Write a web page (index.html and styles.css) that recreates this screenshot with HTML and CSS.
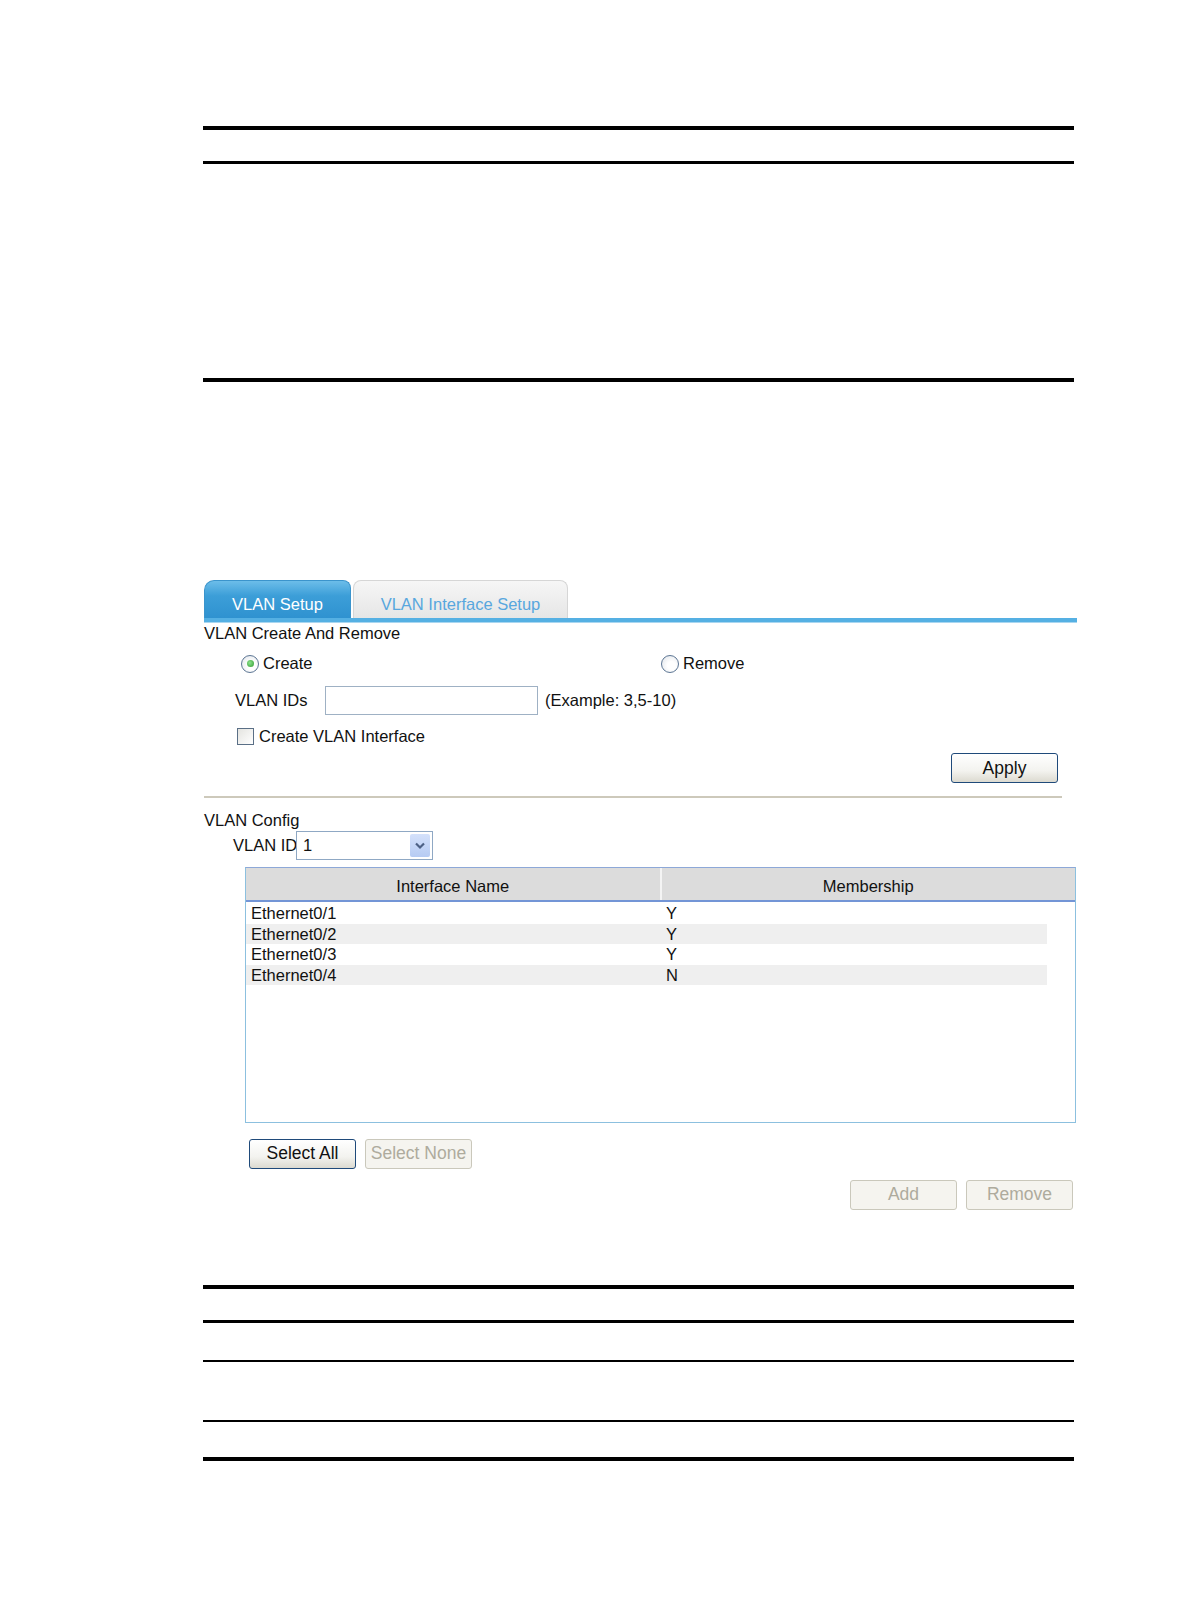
FILE: index.html
```html
<!DOCTYPE html>
<html>
<head>
<meta charset="utf-8">
<link rel="stylesheet" href="styles.css">
</head>
<body>
<div class="doc">
  <div class="rule thick"></div>
  <div class="rule mid gap-a"></div>
  <div class="rule thick gap-b"></div>

  <div class="panel">
    <div class="tabs">
      <div class="tab active">VLAN Setup</div>
      <div class="tab">VLAN Interface Setup</div>
    </div>
    <div class="tabline"></div>

    <div class="title">VLAN Create And Remove</div>
    <div class="radio-row">
      <label class="opt create"><span class="radio checked"></span>Create</label>
      <label class="opt remove"><span class="radio"></span>Remove</label>
    </div>
    <div class="ids-row">
      <span class="ids-label">VLAN IDs</span>
      <span class="textbox"></span>
      <span class="hint">(Example: 3,5-10)</span>
    </div>
    <div class="check-row">
      <span class="checkbox"></span>Create VLAN Interface
    </div>
    <div class="apply-row">
      <span class="btn apply">Apply</span>
    </div>
    <div class="sep"></div>

    <div class="title cfg">VLAN Config</div>
    <div class="id-row">
      <span class="id-label">VLAN ID</span>
      <span class="select"><span class="sel-val">1</span><span class="sel-btn"><svg width="12" height="8" viewBox="0 0 12 8"><path d="M2 1.5 L6 5.5 L10 1.5" fill="none" stroke="#4d6185" stroke-width="2.2"/></svg></span></span>
    </div>

    <div class="grid">
      <div class="ghead">
        <div class="gh">Interface Name</div>
        <div class="gh">Membership</div>
      </div>
      <div class="gbody">
        <div class="grow"><span class="c1">Ethernet0/1</span><span class="c2">Y</span></div>
        <div class="grow alt"><span class="c1">Ethernet0/2</span><span class="c2">Y</span></div>
        <div class="grow"><span class="c1">Ethernet0/3</span><span class="c2">Y</span></div>
        <div class="grow alt"><span class="c1">Ethernet0/4</span><span class="c2">N</span></div>
      </div>
    </div>

    <div class="sel-row">
      <span class="btn">Select All</span>
      <span class="btn disabled">Select None</span>
    </div>
    <div class="act-row">
      <span class="btn disabled">Add</span>
      <span class="btn disabled">Remove</span>
    </div>
  </div>

  <div class="rule thick gap-c"></div>
  <div class="rule mid gap-d"></div>
  <div class="rule thin gap-e"></div>
  <div class="rule thin gap-f"></div>
  <div class="rule thick gap-g"></div>
</div>
</body>
</html>
```
FILE: styles.css
```css
html, body {
  margin: 0;
  padding: 0;
  background: #fff;
}
body {
  font-family: "Liberation Sans", Arial, sans-serif;
  font-size: 16.5px;
  color: #111;
}
.doc {
  margin-left: 203px;
  width: 871px;
  padding-top: 126px;
  padding-bottom: 100px;
}
.rule { background: #000; }
.rule.thick { height: 4px; }
.rule.mid { height: 3px; }
.rule.thin { height: 2px; }
.gap-a { margin-top: 31px; }
.gap-b { margin-top: 214px; }
.gap-c { margin-top: 75px; }
.gap-d { margin-top: 31px; }
.gap-e { margin-top: 37px; }
.gap-f { margin-top: 58px; }
.gap-g { margin-top: 35px; }

.panel {
  margin-top: 198px;
  margin-left: 1px;
  width: 873px;
}
.tabs {
  display: flex;
  align-items: flex-end;
  height: 38px;
}
.tab {
  box-sizing: border-box;
  height: 38px;
  width: 215px;
  margin-left: 2px;
  border: 1px solid #d6d6d6;
  border-bottom: none;
  border-radius: 8px 8px 0 0;
  background: linear-gradient(#f6f6f6, #e6e6e6);
  color: #58a7de;
  text-align: center;
  line-height: 47px;
}
.tab.active {
  width: 147px;
  margin-left: 0;
  border: 1px solid #3b94cc;
  border-bottom: none;
  border-radius: 10px 8px 0 0;
  background: linear-gradient(#6cbde9, #3c9ed8 40%, #2f92d0);
  color: #fff;
}
.tabline {
  height: 4px;
  background: #55b0e3;
  border-bottom: 1px solid #a9d6f0;
}
.title {
  line-height: 21px;
  white-space: nowrap;
}
.radio-row {
  display: flex;
  height: 21px;
  margin-top: 9px;
  align-items: center;
}
.opt {
  display: flex;
  align-items: center;
  gap: 4px;
}
.opt.create { margin-left: 37px; width: 420px; }
.radio {
  box-sizing: border-box;
  width: 18px;
  height: 18px;
  border-radius: 50%;
  border: 1px solid #5d7694;
  background: radial-gradient(circle at 60% 60%, #fff 30%, #dde2e8 100%);
  position: relative;
}
.radio.checked::after {
  content: "";
  position: absolute;
  left: 4.5px;
  top: 4.5px;
  width: 7px;
  height: 7px;
  border-radius: 50%;
  background: radial-gradient(circle at 40% 40%, #8de38d, #2f9a2f);
}
.ids-row {
  display: flex;
  align-items: center;
  margin-top: 12px;
  height: 29px;
}
.ids-label { margin-left: 31px; width: 90px; white-space: nowrap; }
.textbox {
  box-sizing: border-box;
  width: 213px;
  height: 29px;
  border: 1px solid #9fb1c4;
  background: #fff;
}
.hint { margin-left: 7px; white-space: nowrap; }
.check-row {
  display: flex;
  align-items: center;
  gap: 5px;
  margin-top: 12px;
  height: 18px;
  padding-left: 33px;
  white-space: nowrap;
}
.checkbox {
  box-sizing: border-box;
  width: 17px;
  height: 17px;
  border: 1px solid #5a6f86;
  background: linear-gradient(135deg, #e4e4e0, #fff);
}
.apply-row {
  display: flex;
  justify-content: flex-end;
  padding-right: 19px;
  margin-top: 8px;
}
.btn {
  box-sizing: border-box;
  display: inline-flex;
  align-items: center;
  justify-content: center;
  width: 107px;
  height: 30px;
  border: 1px solid #1f4a7a;
  border-radius: 3px;
  background: linear-gradient(#ffffff, #f3f3ef 60%, #dcdad0);
  color: #111;
  font-size: 17.5px;
  white-space: nowrap;
}
.btn.disabled {
  border-color: #cac8bb;
  background: #f5f4ef;
  color: #aeab9d;
}
.sep {
  margin-top: 13px;
  width: 858px;
  height: 2px;
  background: #cdc9bb;
}
.title.cfg { margin-top: 12px; }
.id-row {
  display: flex;
  align-items: center;
  height: 29px;
}
.id-label { margin-left: 29px; width: 63px; flex-shrink: 0; white-space: nowrap; }
.select {
  box-sizing: border-box;
  display: flex;
  align-items: center;
  width: 137px;
  height: 29px;
  border: 1px solid #8fa8c4;
  padding: 2px;
  background: #fff;
  flex-shrink: 0;
}
.sel-val { flex: 1; padding-left: 4px; line-height: 18px; margin-top: -1px; }
.sel-btn {
  width: 20px;
  height: 23px;
  background: linear-gradient(#d4e1fb, #b6cbf3);
  border-radius: 2px;
  display: flex;
  align-items: center;
  justify-content: center;
}
.grid {
  box-sizing: border-box;
  margin-top: 7px;
  margin-left: 41px;
  width: 831px;
  height: 256px;
  border: 1px solid #8cc0df;
  border-top-color: #8da8d8;
}
.ghead {
  display: flex;
  height: 32px;
  background: #dcdcdc;
  border-bottom: 2px solid #7395d6;
}
.gh {
  flex: 1;
  text-align: center;
  line-height: 37px;
}
.gh + .gh { border-left: 2px solid #f4f4f4; }
.gbody { padding-top: 1px; }
.grow {
  display: flex;
  height: 20.6px;
  line-height: 20.6px;
  width: 801px;
}
.grow.alt { background: #efefef; }
.c1 { width: 415px; padding-left: 5px; }
.sel-row {
  display: flex;
  gap: 9px;
  margin-top: 15.5px;
  margin-left: 45px;
}
.act-row {
  display: flex;
  justify-content: flex-end;
  gap: 9px;
  margin-top: 11px;
  padding-right: 4px;
}
```
